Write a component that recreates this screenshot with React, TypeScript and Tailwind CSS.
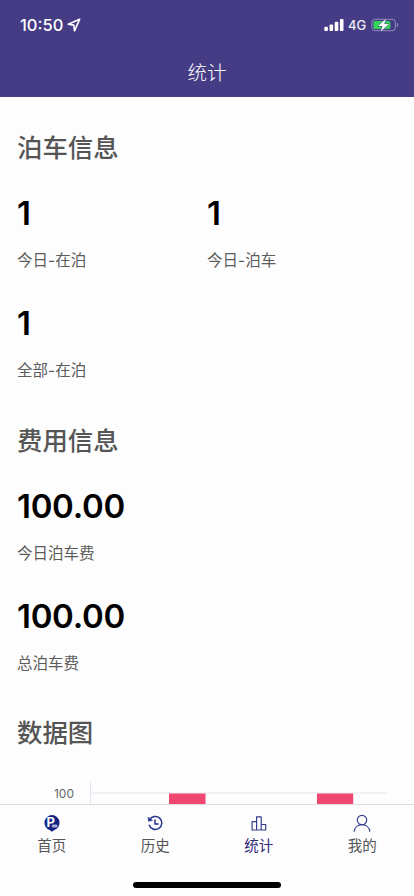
import type { ReactNode } from 'react';
import clsx from 'clsx';

type Stat = { label: string; value: string };

type Tab = { label: string; icon: ReactNode; active?: boolean };

const parkingStats: Stat[] = [
  { label: '今日-在泊', value: '1' },
  { label: '今日-泊车', value: '1' },
  { label: '全部-在泊', value: '1' },
];

const feeStats: Stat[] = [
  { label: '今日泊车费', value: '100.00' },
  { label: '总泊车费', value: '100.00' },
];

function StatusBar() {
  return (
    <div className="flex h-[50px] items-center justify-between pl-5 pr-[15px] text-white">
      <div className="flex items-center gap-[4px]">
        <span className="text-[16.5px] font-medium leading-none">10:50</span>
        <svg width="14" height="14" viewBox="0 0 14 14" fill="none" aria-hidden>
          <path d="M12.7 1.2 1.2 6.2l5.6.9.7 5.7z" stroke="currentColor" strokeWidth="1.6" strokeLinejoin="round" />
        </svg>
      </div>
      <div className="flex items-center">
        <svg width="20" height="12" viewBox="0 0 20 12" fill="currentColor" aria-hidden>
          <rect x="0.3" y="7.8" width="3.6" height="4.2" rx="1" />
          <rect x="5.5" y="5.4" width="3.6" height="6.6" rx="1" />
          <rect x="10.7" y="2.8" width="3.6" height="9.2" rx="1" />
          <rect x="15.9" y="0" width="3.6" height="12" rx="1" />
        </svg>
        <span className="ml-[4px] w-[19px] text-[13px] font-medium leading-none text-white/90">4G</span>
        <svg className="ml-[4px]" width="28" height="14" viewBox="0 0 28 14" aria-hidden>
          <rect x="0.8" y="1.3" width="23.6" height="11.4" rx="3.4" fill="none" stroke="#928dbb" strokeWidth="1" />
          <path d="M25.9 5v4c.8-.3 1.3-1.1 1.3-2s-.5-1.7-1.3-2z" fill="#928dbb" />
          <rect x="2.4" y="2.9" width="17" height="8.2" rx="1.8" fill="#34d65a" />
          <path
            d="M15.2.4 7 8h4.500l-2 5.800L18 6.100h-4.800z"
            fill="#fff"
            stroke="#453c85"
            strokeWidth="1"
            paintOrder="stroke"
          />
        </svg>
      </div>
    </div>
  );
}

function Section({ title, children }: { title: string; children: ReactNode }) {
  return (
    <section>
      <h2 className="flex h-[72px] items-center pt-[2px] text-[25.4px] font-medium text-[#555]">{title}</h2>
      {children}
    </section>
  );
}

function StatItem({ label, value }: Stat) {
  return (
    <div className="h-[110.3px] pt-[10px]">
      <div className="text-[33px] font-semibold leading-[40px] tracking-[-0.3px] text-black">{value}</div>
      <div className="mt-[16px] text-[15.5px] leading-6 text-[#5c5c5c]">{label}</div>
    </div>
  );
}

// Only the top of the chart shows above the tab bar.
function BarChart() {
  return (
    <div className="flex h-[36px] overflow-hidden pt-[14px]">
      <div className="w-[73px] pr-4 text-right text-[12px] leading-[24px] text-[#666]">100</div>
      <svg width="297" height="23" viewBox="0 0 297 23" aria-hidden>
        <path d="M0.5 0v23" stroke="#dfe3f3" />
        <path d="M1 11h295.5" stroke="#e6e6ea" />
        <rect x="79" y="11.5" width="36.5" height="11.5" fill="#ef476f" />
        <rect x="227" y="11.5" width="36.2" height="11.5" fill="#ef476f" />
      </svg>
    </div>
  );
}

const tabs: Tab[] = [
  {
    label: '首页',
    icon: (
      <svg width="18" height="18" viewBox="0 0 18 18" aria-hidden>
        <path d="M9 1a7.7 7.7 0 0 0-2.3 15L9 17.8 11.300 16A7.700 7.700 0 0 0 9 1z" fill="#142283" />
        <text x="3.500" y="13.300" fontSize="13" fontWeight="700" fill="#fff">
          P
        </text>
        <path d="M9.600 10.400h4l.8 1.200v1.900H8.900v-1.900z" fill="#a6acd3" />
      </svg>
    ),
  },
  {
    label: '历史',
    icon: (
      <svg width="18" height="18" viewBox="0 0 18 18" fill="none" stroke="#26328c" strokeWidth="1.5" aria-hidden>
        <path d="M3.500 6.100a6.500 6.500 0 1 1-.4 4.700" />
        <path d="M2 3.200 2.500 7.200l4-.7z" fill="#26328c" strokeWidth="0.6" />
        <path d="M9 5.500v4.400h3.700" />
      </svg>
    ),
  },
  {
    label: '统计',
    active: true,
    icon: (
      <svg width="18" height="18" viewBox="0 0 18 18" fill="none" stroke="#34408f" strokeWidth="1.2" aria-hidden>
        <path d="M2.100 7.700h4.500v8.300H2.100zM6.600 2.800h4.600V16H6.600zM11.200 10.500h4.500V16h-4.500z" strokeLinejoin="round" />
      </svg>
    ),
  },
  {
    label: '我的',
    icon: (
      <svg width="18" height="18" viewBox="0 0 18 18" fill="none" stroke="#34408f" strokeWidth="1.2" aria-hidden>
        <circle cx="9" cy="6" r="4.700" />
        <path d="M1.200 17.600C1.600 13.600 4.700 10.700 9 10.700s7.400 2.900 7.800 6.900" />
      </svg>
    ),
  },
];

function TabBar() {
  return (
    <nav className="flex h-[92px] flex-col items-center border-t border-[#dcdcdf] bg-[#fdfdfd]">
      <div className="grid h-[77px] w-full grid-cols-4">
        {tabs.map((tab) => (
          <button key={tab.label} type="button" className="flex flex-col items-center pt-[9px]">
            {tab.icon}
            <span
              className={clsx(
                'mt-[4px] text-[14.5px] leading-5',
                tab.active ? 'text-[#33297a]' : 'text-[#555]',
              )}
            >
              {tab.label}
            </span>
          </button>
        ))}
      </div>
      <div className="h-[5.5px] w-[148px] rounded-full bg-black" />
    </nav>
  );
}

export default function App() {
  return (
    <div className="flex h-[896px] w-[414px] flex-col overflow-hidden bg-[#fdfdfd] font-[Inter,'Noto_Sans_CJK_SC',sans-serif]">
      <header className="h-[97px] shrink-0 bg-[#453c85]">
        <StatusBar />
        <h1 className="flex h-[47px] items-center justify-center text-[19.5px] font-light text-white">统计</h1>
      </header>

      <main className="min-h-0 flex-1 overflow-hidden px-[17px] pt-[14px]">
        <Section title="泊车信息">
          <div className="grid grid-cols-2">
            {parkingStats.map((s) => (
              <StatItem key={s.label} {...s} />
            ))}
          </div>
        </Section>
        <Section title="费用信息">
          {feeStats.map((s) => (
            <StatItem key={s.label} {...s} />
          ))}
        </Section>
        <Section title="数据图">
          <BarChart />
        </Section>
      </main>

      <TabBar />
    </div>
  );
}
